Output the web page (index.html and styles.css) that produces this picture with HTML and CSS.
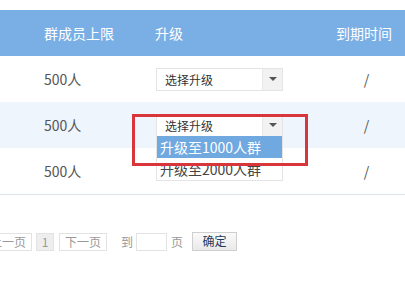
FILE: index.html
```html
<!DOCTYPE html>
<html>
<head>
<meta charset="utf-8">
<link rel="stylesheet" href="styles.css">
</head>
<body>
<div class="page">
  <div class="table">
    <div class="row head">
      <div class="c1">群成员上限</div>
      <div class="c2">升级</div>
      <div class="c3">到期时间</div>
    </div>
    <div class="row">
      <div class="c1">500人</div>
      <div class="c2"><div class="select"><span class="sel-text">选择升级</span><span class="sel-btn"><i class="tri"></i></span></div></div>
      <div class="c3">/</div>
    </div>
    <div class="row alt">
      <div class="c1">500人</div>
      <div class="c2">
        <div class="select open"><span class="sel-text">选择升级</span><span class="sel-btn"><i class="tri"></i></span>
          <div class="options">
            <div class="opt active">升级至1000人群</div>
            <div class="opt">升级至2000人群</div>
          </div>
          <div class="mark"></div>
        </div>
      </div>
      <div class="c3">/</div>
    </div>
    <div class="row last">
      <div class="c1">500人</div>
      <div class="c2"></div>
      <div class="c3">/</div>
    </div>
  </div>
  <div class="pager">
    <span class="btn wide">上一页</span>
    <span class="btn cur">1</span>
    <span class="btn wide">下一页</span>
    <span class="lbl to">到</span>
    <span class="inp"></span>
    <span class="lbl">页</span>
    <span class="btn ok">确定</span>
  </div>
</div>
</body>
</html>
```
FILE: styles.css
```css
html, body {
  margin: 0;
  padding: 0;
  background: #fff;
}
body {
  font-family: "Noto Sans CJK SC", "Noto Sans", sans-serif;
  color: #555;
  width: 405px;
  height: 300px;
  overflow: hidden;
}
* {
  box-sizing: border-box;
}
.page {
  padding-top: 10px;
}
.table {
  border-bottom: 1px solid #dde3ea;
}
.row {
  display: flex;
  align-items: center;
  height: 46px;
  font-size: 14px;
}
.row.head {
  background: #7aafe5;
  color: #fff;
}
.row.alt {
  background: #eef5fd;
}
.c1 {
  flex: 0 0 155px;
  padding-left: 44px;
}
.c2 {
  flex: 0 0 170px;
  position: relative;
  height: 100%;
  display: flex;
  align-items: center;
}
.c3 {
  flex: 0 0 80px;
  text-align: center;
  padding-left: 3px;
}
.row.head .c3 {
  padding-left: 0;
  text-align: right;
  padding-right: 13px;
}
.select {
  position: relative;
  margin-left: 1px;
  width: 127px;
  height: 23px;
  border: 1px solid #e4e4e4;
  background: #fff;
  display: flex;
  align-items: center;
  font-size: 12px;
  color: #333;
}
.sel-text {
  flex: 1;
  padding-left: 8px;
  line-height: 21px;
}
.sel-btn {
  width: 20px;
  height: 21px;
  background: #f2f2f2;
  border-left: 1px solid #e8e8e8;
  display: flex;
  align-items: center;
  justify-content: center;
}
.tri {
  width: 0;
  height: 0;
  border-left: 4px solid transparent;
  border-right: 4px solid transparent;
  border-top: 4px solid #555;
}
.options {
  position: absolute;
  left: -1px;
  top: 21px;
  width: 127px;
  border: 1px solid #e4e4e4;
  border-top: none;
  background: #fff;
  z-index: 2;
}
.opt {
  height: 22px;
  line-height: 22px;
  font-size: 14px;
  padding-left: 3px;
  color: #444;
}
.opt.active {
  background: #70a8e0;
  color: #fff;
}
.mark {
  position: absolute;
  left: -25px;
  top: -1px;
  width: 176px;
  height: 52px;
  border: 3px solid #d9363c;
  z-index: 3;
}
.pager {
  display: flex;
  align-items: center;
  margin-top: 37px;
  margin-left: -16px;
  font-size: 12px;
  color: #999;
}
.btn {
  height: 18px;
  line-height: 16px;
  border: 1px solid #e3e3e3;
  text-align: center;
  margin-right: 4px;
  background: #fff;
}
.btn.wide {
  width: 48px;
}
.btn.cur {
  width: 18px;
  background: #eee;
  margin-right: 5px;
}
.lbl.to {
  margin-left: 10px;
  margin-right: 3px;
}
.inp {
  width: 31px;
  height: 18px;
  border: 1px solid #e3e3e3;
  margin-right: 4px;
}
.btn.ok {
  margin-left: 9px;
  width: 45px;
  height: 19px;
  color: #1f3b5c;
  background: linear-gradient(#fafafa, #e9e9e9);
  border-color: #cfcfcf;
}
```
